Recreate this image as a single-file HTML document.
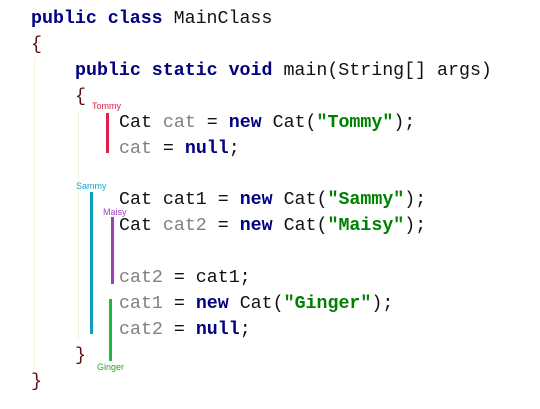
<!DOCTYPE html>
<html><head><style>
body{margin:0;width:540px;height:409px;background:#fff;position:relative;overflow:hidden;font-family:"Liberation Mono",monospace;font-size:18.3px;color:#111}
.l{position:absolute;white-space:pre;line-height:26px;height:26px}
.k{color:#000080;font-weight:bold}
.s{color:#008000;font-weight:bold}
.v{color:#808080}
.b{color:#5a0f0f}
.bar{position:absolute;width:3px}
.lab{position:absolute;font-family:"Liberation Sans",sans-serif;font-size:9px}
.g{position:absolute;width:1px;background:#f3f1e0}
</style></head><body>
<div class="g" style="left:34px;top:58px;height:310px"></div>
<div class="g" style="left:78px;top:110px;height:230px"></div>
<div class="l" style="left:31px;top:6px"><span class="k">public class</span> MainClass</div>
<div class="l b" style="left:31px;top:32px">{</div>
<div class="l" style="left:75px;top:58px"><span class="k">public static void</span> main(String[] args)</div>
<div class="l b" style="left:75px;top:84px">{</div>
<div class="l" style="left:119px;top:110px">Cat <span class="v">cat</span> = <span class="k">new</span> Cat(<span class="s">"Tommy"</span>);</div>
<div class="l" style="left:119px;top:136px"><span class="v">cat</span> = <span class="k">null</span>;</div>
<div class="l" style="left:119px;top:187px">Cat cat1 = <span class="k">new</span> Cat(<span class="s">"Sammy"</span>);</div>
<div class="l" style="left:119px;top:213px">Cat <span class="v">cat2</span> = <span class="k">new</span> Cat(<span class="s">"Maisy"</span>);</div>
<div class="l" style="left:119px;top:265px"><span class="v">cat2</span> = cat1;</div>
<div class="l" style="left:119px;top:291px"><span class="v">cat1</span> = <span class="k">new</span> Cat(<span class="s">"Ginger"</span>);</div>
<div class="l" style="left:119px;top:317px"><span class="v">cat2</span> = <span class="k">null</span>;</div>
<div class="l b" style="left:75px;top:343px">}</div>
<div class="l b" style="left:31px;top:369px">}</div>
<div class="lab" style="left:92px;top:101px;color:#e0204a">Tommy</div>
<div class="bar" style="left:106px;top:113px;height:40px;background:#e0204a"></div>
<div class="lab" style="left:76px;top:181px;color:#1aa6c4">Sammy</div>
<div class="bar" style="left:90px;top:192px;height:142px;background:#0fa0c0"></div>
<div class="lab" style="left:103px;top:207px;color:#a040c0">Maisy</div>
<div class="bar" style="left:111px;top:217px;height:67px;background:#9a40b8"></div>
<div class="bar" style="left:109px;top:299px;height:62px;background:#20b840"></div>
<div class="lab" style="left:97px;top:362px;color:#30a030">Ginger</div>
</body></html>
